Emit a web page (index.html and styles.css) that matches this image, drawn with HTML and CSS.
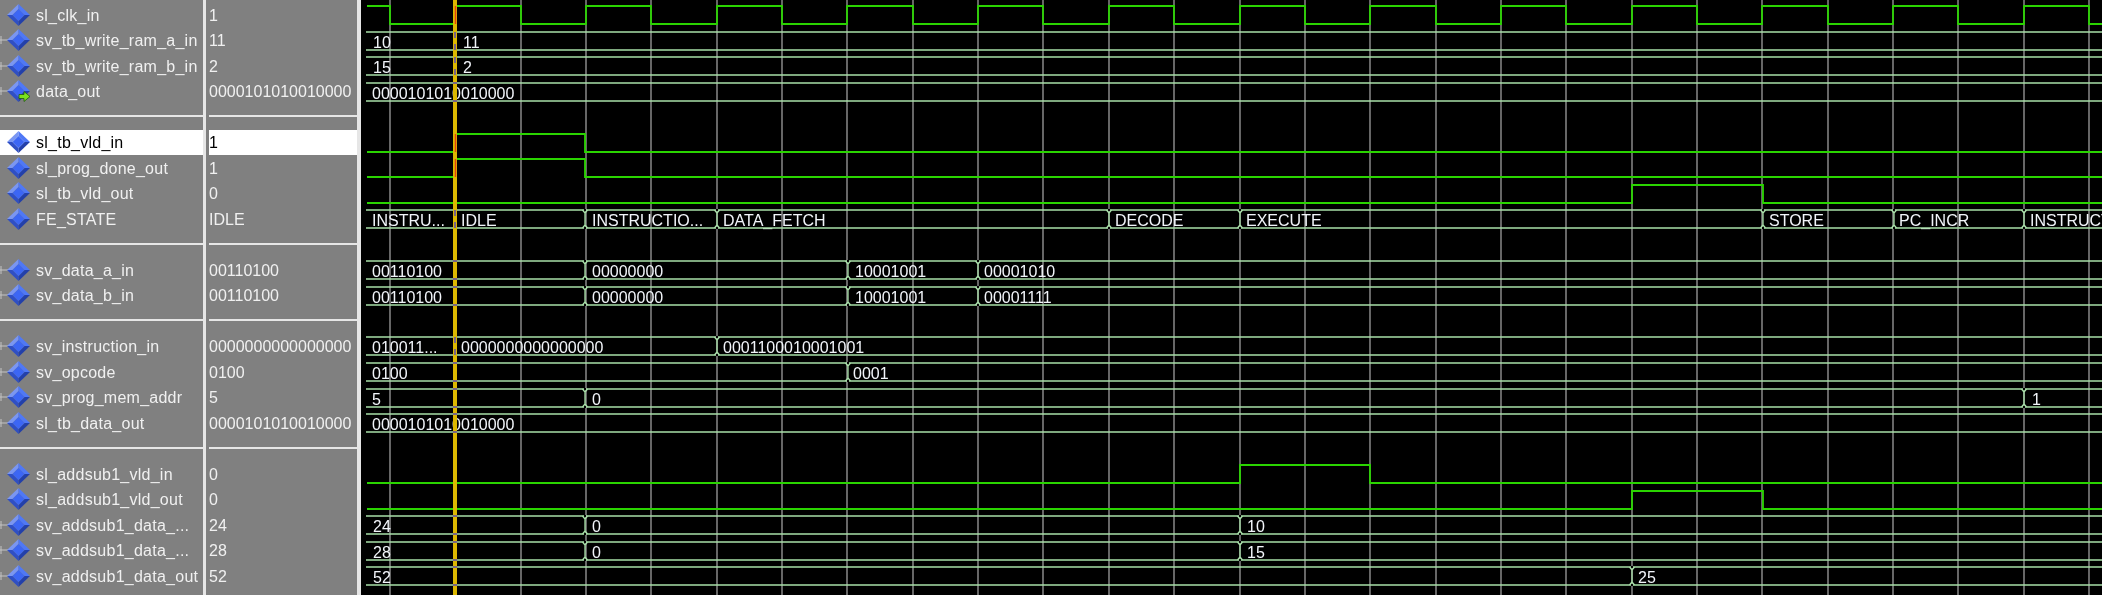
FILE: index.html
```html
<!DOCTYPE html>
<html lang="en">
<head>
    <meta charset="UTF-8">
    <title>Wave</title>
    <link rel="stylesheet" href="styles.css">
</head>
<body>
    <svg class="defs" width="0" height="0">
        <symbol id="sig" viewBox="0 0 30 24">
            <polygon class="f-tl" points="18.5,1 7,12 12.5,12 18.5,6"/>
            <polygon class="f-tr" points="18.5,1 30,12 24.5,12 18.5,6"/>
            <polygon class="f-bl" points="7,12 18.5,23 18.5,18 12.5,12"/>
            <polygon class="f-br" points="30,12 18.5,23 18.5,18 24.5,12"/>
            <polygon class="f-c" points="18.5,6 24.5,12 18.5,18 12.5,12"/>
        </symbol>
        <symbol id="bus-sig" viewBox="0 0 30 24">
            <path class="conn" d="M0 12H8M1 8V16"/>
            <use href="#sig" width="30" height="24"/>
        </symbol>
        <symbol id="out-sig" viewBox="0 0 30 24">
            <use href="#bus-sig" width="30" height="24"/>
            <path class="arrow" d="M19 15.5H24V12.5L30 17.5L24 22.5V19.5H19Z"/>
        </symbol>
    </svg>

    <div class="col names">
        <div class="row"><svg class="ico"><use href="#sig"/></svg>sl_clk_in</div>
        <div class="row"><svg class="ico"><use href="#bus-sig"/></svg>sv_tb_write_ram_a_in</div>
        <div class="row"><svg class="ico"><use href="#bus-sig"/></svg>sv_tb_write_ram_b_in</div>
        <div class="row"><svg class="ico"><use href="#out-sig"/></svg>data_out</div>
        <div class="divider"></div>
        <div class="row selected"><svg class="ico"><use href="#sig"/></svg>sl_tb_vld_in</div>
        <div class="row"><svg class="ico"><use href="#sig"/></svg>sl_prog_done_out</div>
        <div class="row"><svg class="ico"><use href="#sig"/></svg>sl_tb_vld_out</div>
        <div class="row"><svg class="ico"><use href="#sig"/></svg>FE_STATE</div>
        <div class="divider"></div>
        <div class="row"><svg class="ico"><use href="#bus-sig"/></svg>sv_data_a_in</div>
        <div class="row"><svg class="ico"><use href="#bus-sig"/></svg>sv_data_b_in</div>
        <div class="divider"></div>
        <div class="row"><svg class="ico"><use href="#bus-sig"/></svg>sv_instruction_in</div>
        <div class="row"><svg class="ico"><use href="#bus-sig"/></svg>sv_opcode</div>
        <div class="row"><svg class="ico"><use href="#bus-sig"/></svg>sv_prog_mem_addr</div>
        <div class="row"><svg class="ico"><use href="#bus-sig"/></svg>sl_tb_data_out</div>
        <div class="divider"></div>
        <div class="row"><svg class="ico"><use href="#sig"/></svg>sl_addsub1_vld_in</div>
        <div class="row"><svg class="ico"><use href="#sig"/></svg>sl_addsub1_vld_out</div>
        <div class="row"><svg class="ico"><use href="#bus-sig"/></svg>sv_addsub1_data_...</div>
        <div class="row"><svg class="ico"><use href="#bus-sig"/></svg>sv_addsub1_data_...</div>
        <div class="row"><svg class="ico"><use href="#bus-sig"/></svg>sv_addsub1_data_out</div>
    </div>

    <div class="col values">
        <div class="row">1</div>
        <div class="row">11</div>
        <div class="row">2</div>
        <div class="row">0000101010010000</div>
        <div class="divider"></div>
        <div class="row selected">1</div>
        <div class="row">1</div>
        <div class="row">0</div>
        <div class="row">IDLE</div>
        <div class="divider"></div>
        <div class="row">00110100</div>
        <div class="row">00110100</div>
        <div class="divider"></div>
        <div class="row">0000000000000000</div>
        <div class="row">0100</div>
        <div class="row">5</div>
        <div class="row">0000101010010000</div>
        <div class="divider"></div>
        <div class="row">0</div>
        <div class="row">0</div>
        <div class="row">24</div>
        <div class="row">28</div>
        <div class="row">52</div>
    </div>

    <svg class="wave" viewBox="361 0 1741 595">
        <defs>
            <g id="tick">
                <path class="gap" d="M-1 0H1M-1 18H1"/>
                <path class="edge" d="M-2.5 0L0 3V15L-2.5 18M2.5 0L0 3M0 15L2.5 18"/>
            </g>
        </defs>

        <!-- time grid -->
        <path class="grid" d="M390 0V595M521 0V595M586 0V595M651 0V595M717 0V595M782 0V595M847 0V595M913 0V595M978 0V595M1043 0V595M1109 0V595M1174 0V595M1240 0V595M1305 0V595M1370 0V595M1436 0V595M1501 0V595M1566 0V595M1632 0V595M1697 0V595M1762 0V595M1828 0V595M1893 0V595M1958 0V595M2024 0V595M2089 0V595"/>

        <!-- bus values -->
        <text class="val" x="373" y="48">10</text>
        <text class="val" x="463" y="48">11</text>
        <text class="val" x="373" y="73">15</text>
        <text class="val" x="463" y="73">2</text>
        <text class="val" x="372" y="99">0000101010010000</text>

        <text class="val" x="372" y="226">INSTRU...</text>
        <text class="val" x="461" y="226">IDLE</text>
        <text class="val" x="592" y="226">INSTRUCTIO...</text>
        <text class="val" x="723" y="226">DATA_FETCH</text>
        <text class="val" x="1115" y="226">DECODE</text>
        <text class="val" x="1246" y="226">EXECUTE</text>
        <text class="val" x="1769" y="226">STORE</text>
        <text class="val" x="1899" y="226">PC_INCR</text>
        <text class="val" x="2030" y="226">INSTRUCT</text>

        <text class="val" x="372" y="277">00110100</text>
        <text class="val" x="592" y="277">00000000</text>
        <text class="val" x="855" y="277">10001001</text>
        <text class="val" x="984" y="277">00001010</text>
        <text class="val" x="372" y="303">00110100</text>
        <text class="val" x="592" y="303">00000000</text>
        <text class="val" x="855" y="303">10001001</text>
        <text class="val" x="984" y="303">00001111</text>

        <text class="val" x="372" y="353">010011...</text>
        <text class="val" x="461" y="353">0000000000000000</text>
        <text class="val" x="723" y="353">0001100010001001</text>
        <text class="val" x="372" y="379">0100</text>
        <text class="val" x="853" y="379">0001</text>
        <text class="val" x="372" y="405">5</text>
        <text class="val" x="592" y="405">0</text>
        <text class="val" x="2032" y="405">1</text>
        <text class="val" x="372" y="430">0000101010010000</text>

        <text class="val" x="373" y="532">24</text>
        <text class="val" x="592" y="532">0</text>
        <text class="val" x="1247" y="532">10</text>
        <text class="val" x="373" y="558">28</text>
        <text class="val" x="592" y="558">0</text>
        <text class="val" x="1247" y="558">15</text>
        <text class="val" x="373" y="583">52</text>
        <text class="val" x="1638" y="583">25</text>

        <!-- bus outlines -->
        <path class="bus" d="M366 32H2102M366 50H2102M366 57H2102M366 75H2102M366 83H2102M366 101H2102M366 210H2102M366 228H2102M366 261H2102M366 279H2102M366 287H2102M366 305H2102M366 337H2102M366 355H2102M366 363H2102M366 381H2102M366 389H2102M366 407H2102M366 414H2102M366 432H2102M366 516H2102M366 534H2102M366 542H2102M366 560H2102M366 567H2102M366 585H2102"/>

        <!-- value changes -->
        <use href="#tick" x="585" y="210"/>
        <use href="#tick" x="717" y="210"/>
        <use href="#tick" x="1109" y="210"/>
        <use href="#tick" x="1240" y="210"/>
        <use href="#tick" x="1763" y="210"/>
        <use href="#tick" x="1894" y="210"/>
        <use href="#tick" x="2024" y="210"/>
        <use href="#tick" x="585" y="261"/>
        <use href="#tick" x="848" y="261"/>
        <use href="#tick" x="978" y="261"/>
        <use href="#tick" x="585" y="287"/>
        <use href="#tick" x="848" y="287"/>
        <use href="#tick" x="978" y="287"/>
        <use href="#tick" x="717" y="337"/>
        <use href="#tick" x="848" y="363"/>
        <use href="#tick" x="585" y="389"/>
        <use href="#tick" x="2024" y="389"/>
        <use href="#tick" x="585" y="516"/>
        <use href="#tick" x="1240" y="516"/>
        <use href="#tick" x="585" y="542"/>
        <use href="#tick" x="1240" y="542"/>
        <use href="#tick" x="1632" y="567"/>

        <!-- single bit signals -->
        <path class="bit" d="M367 6H390V24H455V6H521V24H586V6H651V24H717V6H782V24H847V6H913V24H978V6H1043V24H1109V6H1174V24H1240V6H1305V24H1370V6H1436V24H1501V6H1566V24H1632V6H1697V24H1762V6H1828V24H1893V6H1958V24H2024V6H2089V24H2102"/>
        <path class="bit" d="M367 152H455V134H585V152H2102"/>
        <path class="bit" d="M367 177H455V159H585V177H2102"/>
        <path class="bit" d="M367 203H1632V185H1763V203H2102"/>
        <path class="bit" d="M367 483H1240V465H1370V483H2102"/>
        <path class="bit" d="M367 509H1632V491H1763V509H2102"/>

        <!-- cursor -->
        <rect class="cursor" x="453" y="0" width="4" height="595"/>
        <path class="cur-bit" d="M455.5 6V24M455.5 134V152M455.5 159V177"/>
        <path class="cur-bus" d="M455 32V38M455 44V50M455 57V63M455 69V75M453 83H457M453 101H457M455 210V216M455 222V228M453 261H457M453 279H457M453 287H457M453 305H457M455 337V343M455 349V355M453 363H457M453 381H457M453 389H457M453 407H457M453 414H457M453 432H457M453 516H457M453 534H457M453 542H457M453 560H457M453 567H457M453 585H457"/>
    </svg>
</body>
</html>
```

FILE: styles.css
```css
html, body {
    margin: 0;
    height: 595px;
    overflow: hidden;
}
body {
    display: flex;
    background-color: #000;
    font-family: "Liberation Sans", Arial, sans-serif;
    font-size: 16px;
}
.defs {
    position: absolute;
}
.col {
    box-sizing: border-box;
    height: 595px;
    padding-top: 2px;
    background-color: #808080;
    color: #f0f0f0;
    border-right: 3px solid #e6e6e6;
    flex-shrink: 0;
    filter: blur(0.3px);
}
.names {
    width: 206px;
    letter-spacing: 0.25px;
}
.values {
    width: 155px;
    padding-left: 3px;
    border-right-width: 4px;
}
.row {
    box-sizing: border-box;
    display: flex;
    align-items: center;
    gap: 6px;
    height: 25.5px;
    padding-top: 2px;
    white-space: nowrap;
}
.selected {
    background-color: #fff;
    color: #000;
}
.divider {
    height: 25.5px;
    background: linear-gradient(#e6e6e6, #e6e6e6) no-repeat 0 11px / 100% 2px;
}
.ico {
    width: 30px;
    height: 24px;
    margin-top: -2px;
    flex-shrink: 0;
}
.f-tl { fill: #7a96f2; }
.f-tr { fill: #4f78f6; }
.f-bl { fill: #2f4fc4; }
.f-br { fill: #2340aa; }
.f-c { fill: #3c66f4; }
.conn {
    fill: none;
    stroke: #c4c4c4;
    stroke-width: 1;
}
.arrow {
    fill: #7be01e;
    stroke: #1f5a10;
    stroke-width: 0.8;
}
.wave {
    flex: 1;
    height: 595px;
    filter: blur(0.3px);
}
.grid {
    fill: none;
    stroke: #808080;
    stroke-width: 1.6;
}
.val {
    fill: #f2f5fa;
    font-size: 16px;
}
.bus {
    fill: none;
    stroke: #a8e0a8;
    stroke-width: 1.6;
}
.gap {
    fill: none;
    stroke: #000;
    stroke-width: 2;
}
.edge {
    fill: none;
    stroke: #a8e0a8;
    stroke-width: 1.3;
}
.bit {
    fill: none;
    stroke: #2ad400;
    stroke-width: 1.8;
}
.cursor {
    fill: #dcb800;
}
.cur-bit {
    fill: none;
    stroke: #e8420a;
    stroke-width: 1.4;
}
.cur-bus {
    fill: none;
    stroke: #5a48b0;
    stroke-width: 1.5;
}
```
